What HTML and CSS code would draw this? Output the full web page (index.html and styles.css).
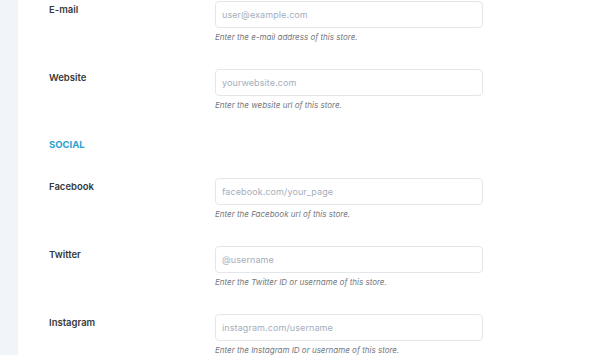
FILE: index.html
```html
<!DOCTYPE html>
<html lang="en">
<head>
    <meta charset="UTF-8">
    <meta name="viewport" content="width=device-width, initial-scale=1.0">
    <title>Store settings</title>
    <link rel="stylesheet" href="styles.css">
</head>
<body>
    <div class="layout">
        <aside class="sidebar"></aside>
        <main class="content">
            <div class="field">
                <label for="email">E-mail</label>
                <div class="control">
                    <input type="text" id="email" placeholder="user@example.com">
                    <p class="help">Enter the e-mail address of this store.</p>
                </div>
            </div>
            <div class="field">
                <label for="website">Website</label>
                <div class="control">
                    <input type="text" id="website" placeholder="yourwebsite.com">
                    <p class="help">Enter the website url of this store.</p>
                </div>
            </div>

            <h3 class="section-title">SOCIAL</h3>

            <div class="field">
                <label for="facebook">Facebook</label>
                <div class="control">
                    <input type="text" id="facebook" placeholder="facebook.com/your_page">
                    <p class="help">Enter the Facebook url of this store.</p>
                </div>
            </div>
            <div class="field">
                <label for="twitter">Twitter</label>
                <div class="control">
                    <input type="text" id="twitter" placeholder="@username">
                    <p class="help">Enter the Twitter ID or username of this store.</p>
                </div>
            </div>
            <div class="field">
                <label for="instagram">Instagram</label>
                <div class="control">
                    <input type="text" id="instagram" placeholder="instagram.com/username">
                    <p class="help">Enter the Instagram ID or username of this store.</p>
                </div>
            </div>
        </main>
    </div>
</body>
</html>
```

FILE: styles.css
```css
body {
    font-family: Inter, 'Liberation Sans', Arial, sans-serif;
    margin: 0;
    padding: 0;
    background-color: #ffffff;
    color: #333;
}
.layout {
    display: flex;
    height: 100vh;
    overflow: hidden;
}
.sidebar {
    width: 18px;
    flex-shrink: 0;
    background-color: #f1f4f8;
}
.content {
    flex: 1;
    padding: 1px 0 0 31px;
}
.field {
    display: grid;
    grid-template-columns: 166px 268px;
    height: 68px;
}
.field label {
    font-size: 9.5px;
    font-weight: 600;
    line-height: 14px;
    padding-top: 2px;
    color: #363a40;
}
.field input {
    display: block;
    box-sizing: border-box;
    width: 268px;
    height: 27px;
    margin: 0;
    padding: 0 6px;
    border: 1px solid #e3e7ec;
    border-radius: 4px;
    font-family: inherit;
    font-size: 9px;
    letter-spacing: 0.1px;
    color: #333;
    background: #fff;
}
.field input::placeholder {
    color: #a4aebd;
}
.help {
    margin: 4px 0 0;
    font-size: 8px;
    line-height: 11px;
    font-style: italic;
    color: #74787e;
}
.section-title {
    margin: 0 0 27px;
    padding-top: 1px;
    font-size: 9.5px;
    line-height: 13px;
    font-weight: 700;
    color: #2ba2d3;
}
```
